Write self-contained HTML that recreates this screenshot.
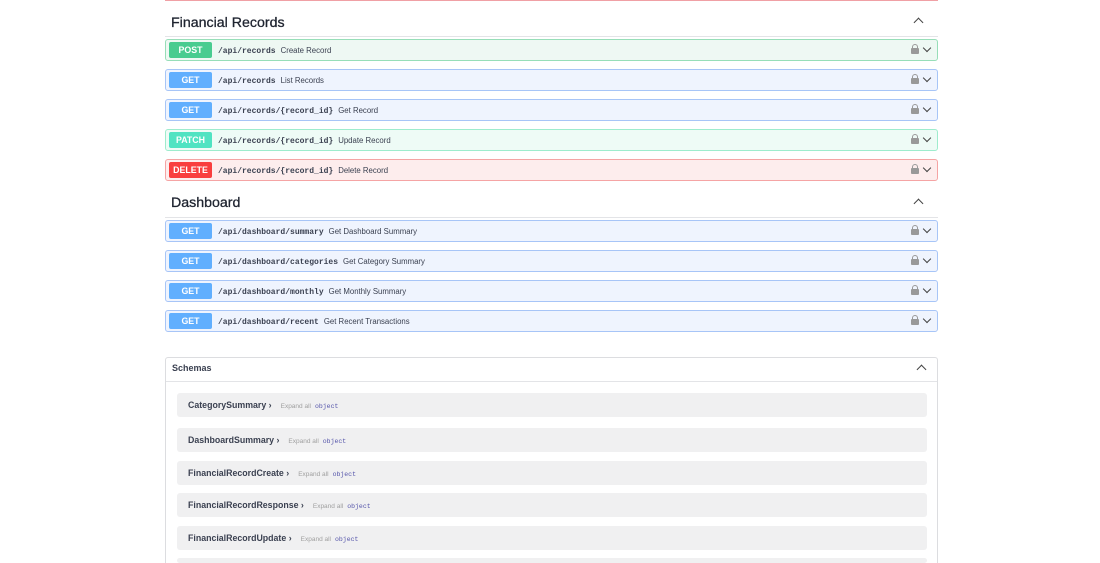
<!DOCTYPE html>
<html><head><meta charset="utf-8"><style>
html,body{margin:0;width:1100px;height:563px;overflow:hidden}
body{background:#fff;font-family:"Liberation Sans",sans-serif;position:relative;color:#3b4151}
.abs{position:absolute}
.topline{left:165px;width:773px;top:0;height:1px;background:#f0a0a5}
.h{left:171px;font-size:14.2px;color:#1f2430;-webkit-text-stroke:0.3px #1f2430}
.hl{left:165px;width:773px;height:1px;background:#e3e4e7}
.caret{width:6px;height:6px;border-left:1.3px solid #444;border-top:1.3px solid #444;transform:rotate(45deg)}
.op{left:165px;width:771px;height:20px;border:1px solid;border-radius:3px}
.b{position:absolute;left:3px;top:2px;width:43px;height:16px;border-radius:2px;color:#fff;font-weight:bold;font-size:8.8px;text-align:center;line-height:17px}
.p{position:absolute;left:52px;top:5px;font-family:"Liberation Mono",monospace;font-weight:bold;font-size:8px;color:#3b4151;line-height:12px}
.d{font-family:"Liberation Sans",sans-serif;font-weight:normal;font-size:7.8px;color:#3b4151;margin-left:5px}
.lock{position:absolute;right:18px;top:5px;width:8px;height:6px;background:#999;border-radius:1px;margin-top:3px}
.lock:before{content:"";position:absolute;left:1.3px;top:-4px;width:3.4px;height:4px;border:1.3px solid #999;border-bottom:none;border-radius:3px 3px 0 0}
.chev{position:absolute;right:7px;top:5px;width:5px;height:5px;border-right:1.3px solid #444;border-bottom:1.3px solid #444;transform:rotate(45deg)}
.post{background:#eef8f3;border-color:#97deb8}.post .b{background:#49cc90}
.get{background:#eff4fe;border-color:#a7c5f7}.get .b{background:#61affe}
.patch{background:#eefbf6;border-color:#9eeccd}.patch .b{background:#50e3c2}
.del{background:#fdeded;border-color:#f5a4a4}.del .b{background:#f93e3e}
.sch{left:165px;width:771px;top:357px;height:220px;border:1px solid #dcdde0;border-radius:3px}
.sh{left:172px;top:363px;font-size:9px;font-weight:bold;color:#3b4151}
.si{left:177px;width:750px;height:24px;background:#f0f0f1;border-radius:3px}
.si span{position:absolute;left:11px;top:7px;font-size:8.8px;font-weight:bold;color:#3b4151;white-space:nowrap}
.si i{font-style:normal;font-weight:normal;color:#a0a0a0;font-size:6.5px;margin-left:9px}
.si em{font-style:normal;font-family:"Liberation Mono",monospace;color:#55a;font-size:6.5px;font-weight:normal;margin-left:4px}
</style></head><body>
<div class="abs topline"></div>
<div class="abs h" style="top:15px">Financial Records</div>
<div class="abs caret" style="left:915px;top:19px"></div>
<div class="abs hl" style="top:36px"></div>

<div class="abs op post" style="top:39px"><div class="b">POST</div><div class="p">/api/records<span class="d">Create Record</span></div><div class="lock"></div><div class="chev"></div></div>
<div class="abs op get" style="top:69px"><div class="b">GET</div><div class="p">/api/records<span class="d">List Records</span></div><div class="lock"></div><div class="chev"></div></div>
<div class="abs op get" style="top:99px"><div class="b">GET</div><div class="p">/api/records/{record_id}<span class="d">Get Record</span></div><div class="lock"></div><div class="chev"></div></div>
<div class="abs op patch" style="top:129px"><div class="b">PATCH</div><div class="p">/api/records/{record_id}<span class="d">Update Record</span></div><div class="lock"></div><div class="chev"></div></div>
<div class="abs op del" style="top:159px"><div class="b">DELETE</div><div class="p">/api/records/{record_id}<span class="d">Delete Record</span></div><div class="lock"></div><div class="chev"></div></div>

<div class="abs h" style="top:195px">Dashboard</div>
<div class="abs caret" style="left:915px;top:200px"></div>
<div class="abs hl" style="top:217px"></div>

<div class="abs op get" style="top:220px"><div class="b">GET</div><div class="p">/api/dashboard/summary<span class="d">Get Dashboard Summary</span></div><div class="lock"></div><div class="chev"></div></div>
<div class="abs op get" style="top:250px"><div class="b">GET</div><div class="p">/api/dashboard/categories<span class="d">Get Category Summary</span></div><div class="lock"></div><div class="chev"></div></div>
<div class="abs op get" style="top:280px"><div class="b">GET</div><div class="p">/api/dashboard/monthly<span class="d">Get Monthly Summary</span></div><div class="lock"></div><div class="chev"></div></div>
<div class="abs op get" style="top:310px"><div class="b">GET</div><div class="p">/api/dashboard/recent<span class="d">Get Recent Transactions</span></div><div class="lock"></div><div class="chev"></div></div>

<div class="abs sch"></div>
<div class="abs sh">Schemas</div>
<div class="abs caret" style="left:918px;top:366px"></div>
<div class="abs hl" style="top:381px;left:166px;width:771px"></div>
<div class="abs si" style="top:393px"><span>CategorySummary ›<i>Expand all</i><em>object</em></span></div>
<div class="abs si" style="top:428px"><span>DashboardSummary ›<i>Expand all</i><em>object</em></span></div>
<div class="abs si" style="top:461px"><span>FinancialRecordCreate ›<i>Expand all</i><em>object</em></span></div>
<div class="abs si" style="top:493px"><span>FinancialRecordResponse ›<i>Expand all</i><em>object</em></span></div>
<div class="abs si" style="top:526px"><span>FinancialRecordUpdate ›<i>Expand all</i><em>object</em></span></div>
<div class="abs si" style="top:558px;height:5px"></div>
</body></html>
